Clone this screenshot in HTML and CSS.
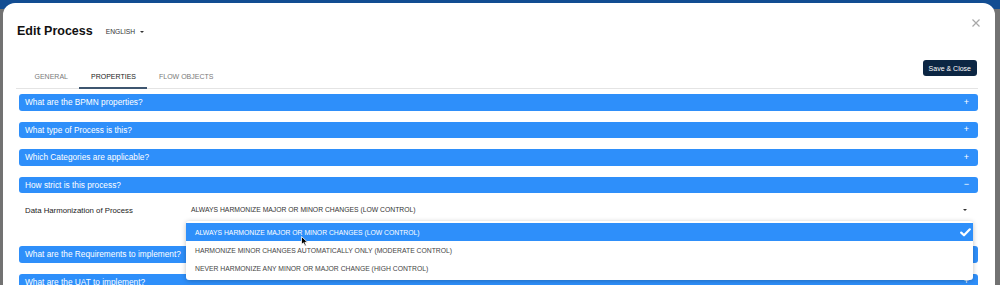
FILE: index.html
```html
<!DOCTYPE html>
<html lang="en">
<head>
    <meta charset="UTF-8">
    <meta name="viewport" content="width=device-width, initial-scale=1.0">
    <title>Edit Process</title>
    <link rel="stylesheet" href="styles.css">
</head>
<body>
    <div class="modal">
        <div class="modal-header">
            <h2 class="modal-title">Edit Process</h2>
            <div class="lang-select">ENGLISH <span class="caret"></span></div>
            <svg class="close-btn" width="8" height="8" viewBox="0 0 8 8">
                <path d="M0.5 0.5 L7.5 7.5 M7.5 0.5 L0.5 7.5" stroke="#a8a8a8" stroke-width="1.2" fill="none"/>
            </svg>
        </div>

        <div class="toolbar">
            <div class="tabs">
                <div class="tab">GENERAL</div>
                <div class="tab active">PROPERTIES</div>
                <div class="tab">FLOW OBJECTS</div>
            </div>
            <button class="save-btn">Save &amp; Close</button>
        </div>

        <div class="sections">
            <div class="section">
                <div class="section-bar"><span>What are the BPMN properties?</span><span class="toggle">+</span></div>
            </div>
            <div class="section">
                <div class="section-bar"><span>What type of Process is this?</span><span class="toggle">+</span></div>
            </div>
            <div class="section">
                <div class="section-bar"><span>Which Categories are applicable?</span><span class="toggle">+</span></div>
            </div>
            <div class="section open">
                <div class="section-bar"><span>How strict is this process?</span><span class="toggle minus">&minus;</span></div>
                <div class="section-body">
                    <div class="field-row">
                        <label class="field-label">Data Harmonization of Process</label>
                        <div class="select">
                            <div class="select-value">
                                <span>ALWAYS HARMONIZE MAJOR OR MINOR CHANGES (LOW CONTROL)</span>
                                <span class="caret"></span>
                            </div>
                            <ul class="dropdown">
                                <li class="option selected">
                                    <span>ALWAYS HARMONIZE MAJOR OR MINOR CHANGES (LOW CONTROL)</span>
                                    <svg width="11" height="9" viewBox="0 0 11 9">
                                        <path d="M1.2 4.6 L4 7.3 L9.8 1.3" stroke="#fff" stroke-width="2.2" fill="none" stroke-linecap="round" stroke-linejoin="round"/>
                                    </svg>
                                    <svg class="cursor" width="8" height="11" viewBox="0 0 8 11">
                                        <path d="M0.5 0.5 L0.5 8.5 L2.5 6.8 L4 10 L5.3 9.4 L3.9 6.3 L6.6 6.3 Z" fill="#000" stroke="#fff" stroke-width="0.8"/>
                                    </svg>
                                </li>
                                <li class="option">HARMONIZE MINOR CHANGES AUTOMATICALLY ONLY (MODERATE CONTROL)</li>
                                <li class="option">NEVER HARMONIZE ANY MINOR OR MAJOR CHANGE (HIGH CONTROL)</li>
                            </ul>
                        </div>
                    </div>
                </div>
            </div>
            <div class="section">
                <div class="section-bar"><span>What are the Requirements to implement?</span><span class="toggle">+</span></div>
            </div>
            <div class="section">
                <div class="section-bar"><span>What are the UAT to implement?</span><span class="toggle">+</span></div>
            </div>
        </div>
    </div>
</body>
</html>
```

FILE: styles.css
```css
body {
    font-family: "Liberation Sans", Arial, sans-serif;
    margin: 0;
    padding: 3px 5px 0 3px;
    height: 285px;
    overflow: hidden;
    box-sizing: border-box;
    background: linear-gradient(to bottom, #124d92 0, #124d92 9px, #727272 9px);
}
.modal {
    background: #fff;
    border-radius: 12px 12px 0 0;
    padding: 20px 17px 0 16px;
    height: 282px;
    box-sizing: border-box;
    overflow: hidden;
}
.modal-header {
    display: flex;
    align-items: center;
    height: 16px;
}
.modal-title {
    margin: 0 0 0 -2px;
    font-size: 12.5px;
    line-height: 16px;
    font-weight: bold;
    color: #111;
}
.lang-select {
    margin-left: 13px;
    margin-top: 1px;
    font-size: 6.7px;
    color: #333;
    display: flex;
    align-items: center;
}
.caret {
    display: inline-block;
    width: 0;
    height: 0;
    border-left: 2px solid transparent;
    border-right: 2px solid transparent;
    border-top: 2.5px solid #333;
}
.lang-select .caret {
    margin-left: 5px;
}
.close-btn {
    margin-left: auto;
    margin-right: -2px;
    margin-top: -16px;
}
.toolbar {
    display: flex;
    align-items: flex-start;
    margin: 21px 0 0 -3px;
    border-bottom: 1px solid #e4e4e4;
}
.tabs {
    display: flex;
    padding-left: 7px;
}
.tab {
    font-size: 7px;
    line-height: 9px;
    color: #7a7a7a;
    padding: 12px 11.5px 6px;
    border-bottom: 2px solid transparent;
    margin-bottom: -1px;
}
.tab.active {
    color: #222;
    border-bottom-color: #3e5670;
}
.save-btn {
    margin-left: auto;
    margin-right: 1px;
    height: 16px;
    padding: 0 6px;
    border: none;
    border-radius: 3px;
    background-color: #0c2643;
    color: #fff;
    font-family: inherit;
    font-size: 7px;
    cursor: pointer;
}
.sections {
    margin-top: 5px;
}
.section {
    margin-bottom: 11px;
}
.section-bar {
    display: flex;
    align-items: center;
    justify-content: space-between;
    height: 16.5px;
    padding: 0 9px 0 6px;
    background-color: #2e8ffa;
    border-radius: 3px;
    color: #fff;
    font-size: 8.3px;
}
.toggle {
    font-size: 9px;
    line-height: 9px;
}
.section-body {
    padding: 10px 5px 19px 6px;
}
.field-row {
    display: grid;
    grid-template-columns: 161px 1fr;
    align-items: center;
}
.field-label {
    font-size: 7.8px;
    color: #222;
    margin-top: 1px;
}
.select {
    position: relative;
}
.select-value {
    display: flex;
    align-items: center;
    justify-content: space-between;
    height: 13px;
    padding: 0 6px 0 5px;
    font-size: 6.8px;
    color: #333;
}
.dropdown {
    position: absolute;
    top: calc(100% + 5px);
    left: 0;
    right: 0;
    z-index: 5;
    margin: 0;
    padding: 2px 0 3px;
    list-style: none;
    background: #fff;
    border-radius: 3px;
    box-shadow: 0 1px 5px rgba(0, 0, 0, 0.25);
}
.option {
    position: relative;
    display: flex;
    align-items: center;
    justify-content: space-between;
    height: 18px;
    padding: 0 2px 0 9px;
    font-size: 6.8px;
    color: #444;
}
.option.selected {
    background-color: #2e8ffa;
    color: #fff;
}
.cursor {
    position: absolute;
    left: 115px;
    top: 13px;
}
```
